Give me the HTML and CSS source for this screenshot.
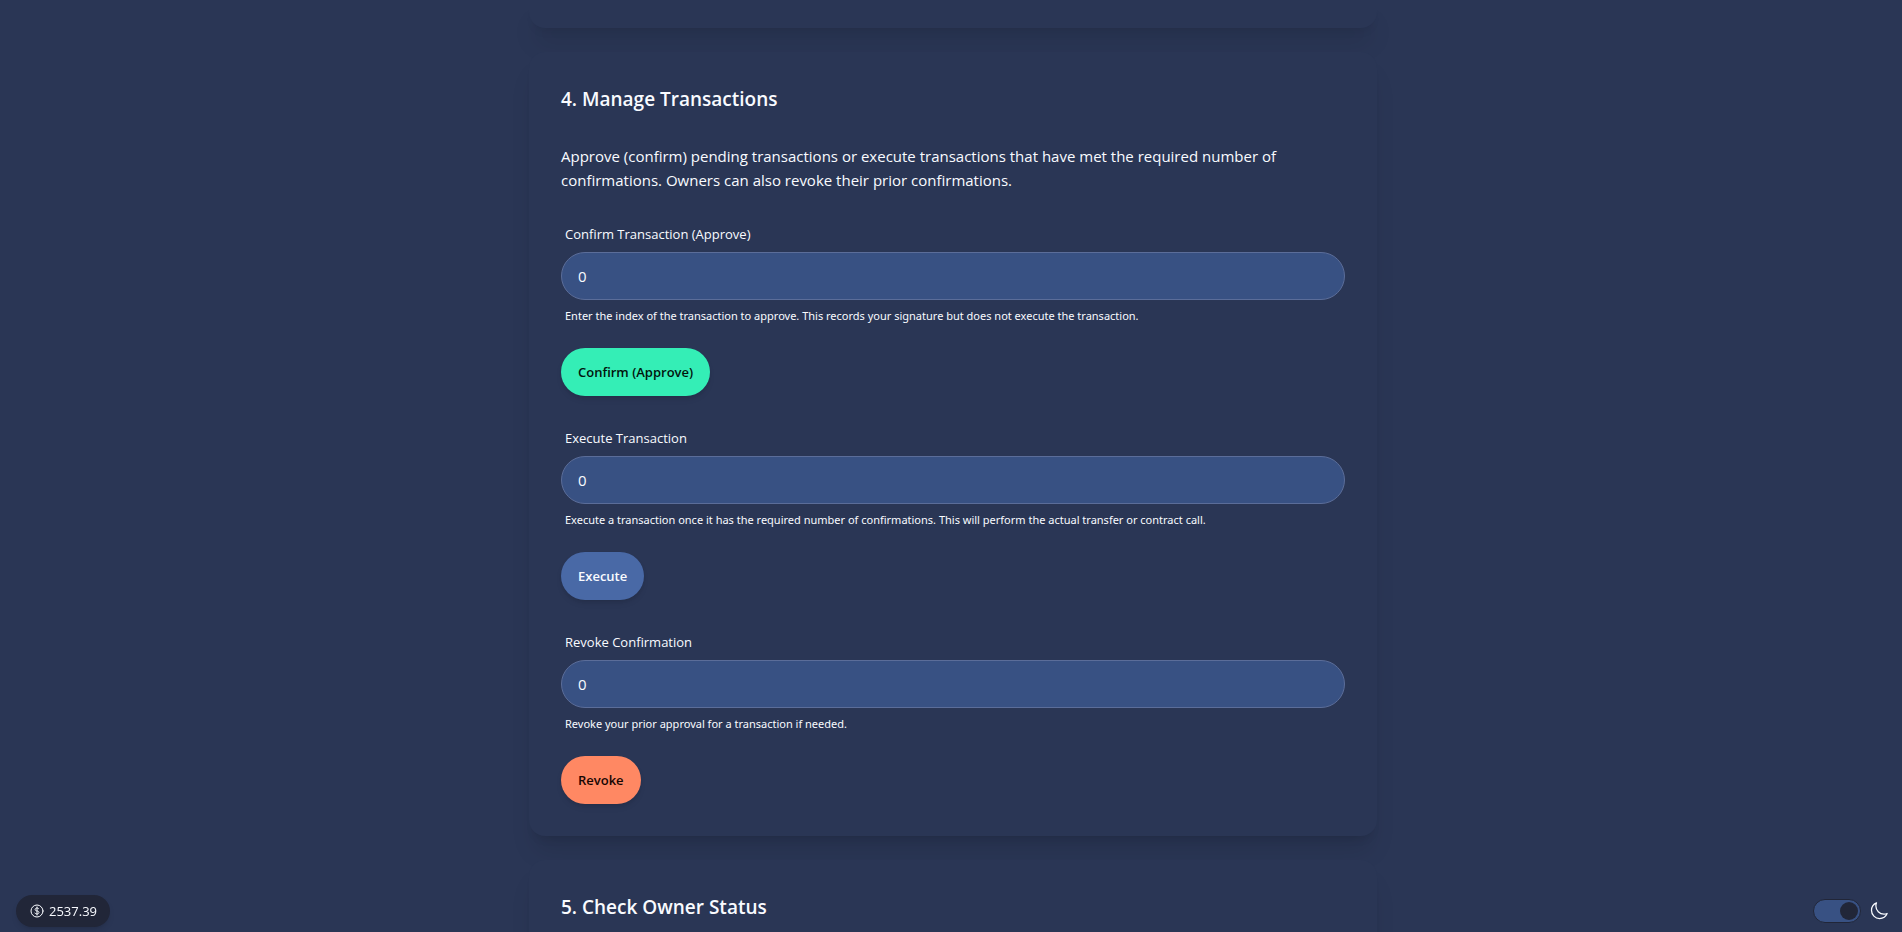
FILE: index.html
```html
<!DOCTYPE html>
<html lang="en">
<head>
<meta charset="utf-8">
<meta name="viewport" content="width=device-width, initial-scale=1">
<title>Multisig Wallet</title>
<link rel="stylesheet" href="styles.css">
</head>
<body>
<main class="page">
  <section class="card card-previous" aria-hidden="true"></section>

  <section class="card">
    <h2 class="card-title">4. Manage Transactions</h2>
    <p class="card-text">Approve (confirm) pending transactions or execute transactions that have met the required number of confirmations. Owners can also revoke their prior confirmations.</p>

    <form class="action">
      <label class="label" for="confirm-index">Confirm Transaction (Approve)</label>
      <input class="input" id="confirm-index" type="text" inputmode="numeric" value="0">
      <p class="hint">Enter the index of the transaction to approve. This records your signature but does not execute the transaction.</p>
      <button class="btn btn-success" type="button">Confirm (Approve)</button>
    </form>

    <form class="action">
      <label class="label" for="execute-index">Execute Transaction</label>
      <input class="input" id="execute-index" type="text" inputmode="numeric" value="0">
      <p class="hint">Execute a transaction once it has the required number of confirmations. This will perform the actual transfer or contract call.</p>
      <button class="btn btn-accent" type="button">Execute</button>
    </form>

    <form class="action">
      <label class="label" for="revoke-index">Revoke Confirmation</label>
      <input class="input" id="revoke-index" type="text" inputmode="numeric" value="0">
      <p class="hint">Revoke your prior approval for a transaction if needed.</p>
      <button class="btn btn-error" type="button">Revoke</button>
    </form>
  </section>

  <section class="card">
    <h2 class="card-title">5. Check Owner Status</h2>
  </section>
</main>

<footer class="dock">
  <button class="price" type="button">
    <svg class="price-icon" viewBox="0 0 24 24" aria-hidden="true"><path d="M12 6v12m-3-2.818l.879.659c1.171.879 3.07.879 4.242 0 1.172-.879 1.172-2.303 0-3.182C13.536 12.219 12.768 12 12 12c-.725 0-1.45-.22-2.003-.659-1.106-.879-1.106-2.303 0-3.182s2.9-.879 4.006 0l.415.33M21 12a9 9 0 11-18 0 9 9 0 0118 0z"/></svg>
    <span>2537.39</span>
  </button>
  <div class="theme">
    <input class="toggle" id="theme-toggle" type="checkbox" checked>
    <label class="theme-label" for="theme-toggle" aria-label="Dark theme">
      <svg class="theme-icon" viewBox="0 0 24 24" aria-hidden="true"><path d="M21.752 15.002A9.718 9.718 0 0118 15.75c-5.385 0-9.75-4.365-9.75-9.75 0-1.33.266-2.597.748-3.752A9.753 9.753 0 003 11.25C3 16.635 7.365 21 12.75 21a9.753 9.753 0 009.002-5.998z"/></svg>
    </label>
  </div>
</footer>
</body>
</html>
```
FILE: styles.css
```css
:root {
  --base: #2a3655;
  --field: #385183;
  --dark: #212638;
  --text: #f9fbff;
}

* {
  box-sizing: border-box;
}

body {
  margin: 0;
  height: 100vh;
  overflow: hidden;
  background: var(--base);
  color: var(--text);
  font-family: "Segoe UI", "Open Sans", "Noto Sans", sans-serif;
  font-size: 15px;
  line-height: 24px;
}

.page {
  display: flex;
  flex-direction: column;
  gap: 24px;
  max-width: 852px;
  height: 100%;
  margin: 0 auto;
  padding-left: 4px;
}

.card {
  display: flex;
  flex-direction: column;
  flex-shrink: 0;
  padding: 32px;
  border-radius: 16px;
  background: var(--base);
  box-shadow: 0 20px 25px -5px rgba(0, 0, 0, 0.1), 0 8px 10px -6px rgba(0, 0, 0, 0.1);
}

.card-previous {
  padding: 0 0 28px;
  border-radius: 0 0 16px 16px;
}

.card-title {
  margin: 0 0 30px;
  font-size: 19px;
  font-weight: 600;
  line-height: 30px;
}

.card-text {
  margin: 0 0 24px;
}

.action {
  display: flex;
  flex-direction: column;
  align-items: flex-start;
}

.action + .action {
  margin-top: 24px;
}

.label {
  padding: 8px 4px;
  font-size: 13px;
  line-height: 20px;
}

.input {
  width: 100%;
  height: 48px;
  padding: 0 16px;
  border: 1px solid #5b6d99;
  border-radius: 24px;
  background: var(--field);
  color: var(--text);
  font: inherit;
}

.hint {
  margin: 0 0 16px;
  padding: 8px 4px;
  font-family: "Segoe UI", "Noto Sans", sans-serif;
  font-size: 11px;
  line-height: 16px;
}

.btn {
  height: 48px;
  padding: 0 17px;
  border: 0;
  border-radius: 24px;
  font-family: inherit;
  font-size: 13px;
  font-weight: 600;
  box-shadow: 0 4px 6px -1px rgba(0, 0, 0, 0.1), 0 2px 4px -2px rgba(0, 0, 0, 0.1);
}

.btn-success {
  background: #34eeb6;
  color: #02140d;
}

.btn-accent {
  background: #4969a6;
  color: var(--text);
}

.btn-error {
  background: #ff8863;
  color: #160603;
}

.dock {
  position: fixed;
  right: 0;
  bottom: 0;
  left: 0;
  display: flex;
  align-items: center;
  justify-content: space-between;
  padding: 0 13px 5px 16px;
}

.price {
  display: flex;
  align-items: center;
  gap: 4px;
  height: 32px;
  padding: 0 13px;
  border: 0;
  border-radius: 16px;
  background: var(--dark);
  color: var(--text);
  font-family: inherit;
  font-size: 13px;
  box-shadow: 0 4px 6px -1px rgba(0, 0, 0, 0.1), 0 2px 4px -2px rgba(0, 0, 0, 0.1);
}

.price-icon,
.theme-icon {
  display: block;
  fill: none;
  stroke: currentColor;
  stroke-width: 1.5;
  stroke-linecap: round;
  stroke-linejoin: round;
}

.price-icon {
  width: 16px;
  height: 16px;
}

.theme {
  display: flex;
  align-items: center;
  gap: 8px;
}

.toggle {
  appearance: none;
  display: flex;
  align-items: center;
  width: 48px;
  height: 24px;
  margin: 0;
  padding: 0 2px;
  border: 1px solid var(--dark);
  border-radius: 12px;
  background: var(--field);
}

.toggle::before {
  content: "";
  width: 18px;
  height: 18px;
  border-radius: 50%;
  background: var(--dark);
}

.toggle:checked {
  justify-content: flex-end;
}

.theme-icon {
  width: 20px;
  height: 20px;
}
```
